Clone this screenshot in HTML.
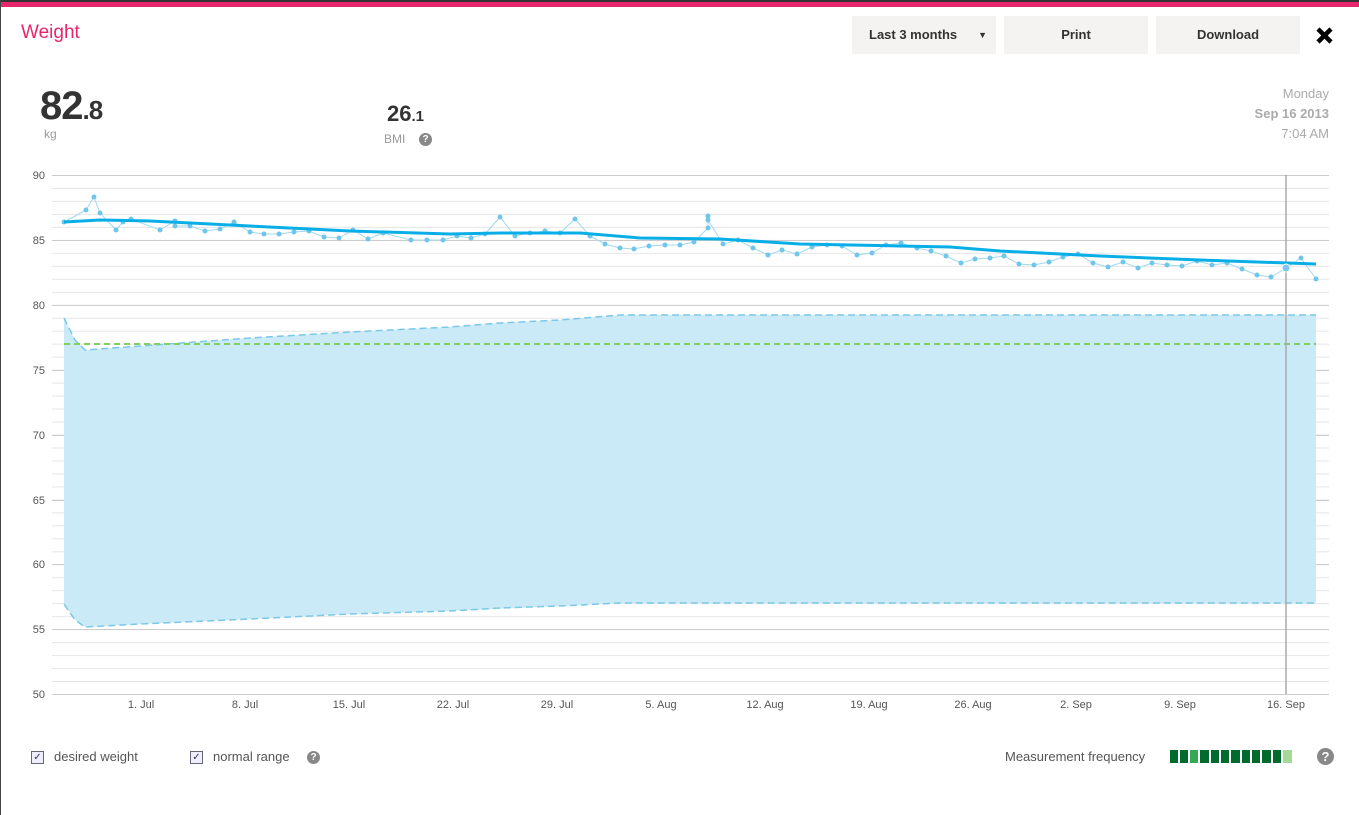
<!DOCTYPE html>
<html><head><meta charset="utf-8"><style>
body{margin:0;width:1359px;height:815px;background:#fff;font-family:"Liberation Sans",sans-serif;position:relative;overflow:hidden}
.top{position:absolute;left:0;top:0;width:1359px;height:2px;background:#333}
.pink{position:absolute;left:0;top:2px;width:1359px;height:5px;background:#e8266b}
.lb{position:absolute;left:0;top:0;width:1px;height:815px;background:#444}
.t{position:absolute;white-space:nowrap}
.btn{position:absolute;top:16px;height:38px;background:#f4f3f2;font-weight:bold;font-size:13px;color:#333;line-height:38px;text-align:center}
.q{position:absolute;width:13px;height:13px;border-radius:50%;background:#888;color:#fff;font-size:10px;font-weight:bold;text-align:center;line-height:13px}
.cb{position:absolute;width:11px;height:11px;border:1px solid #667;background:#eef;font-size:10px;line-height:11px;text-align:center;color:#335}
</style></head><body>
<div class="top"></div><div class="pink"></div><div class="lb"></div>
<div class="t" style="left:21px;top:22px;font-size:19px;color:#e8266b">Weight</div>
<div class="btn" style="left:852px;width:144px;text-align:left;padding-left:17px;box-sizing:border-box">Last 3 months<span style="position:absolute;right:9px;top:0;font-size:9px">▼</span></div>
<div class="btn" style="left:1004px;width:144px">Print</div>
<div class="btn" style="left:1156px;width:144px">Download</div>
<svg style="position:absolute;left:1315px;top:26px" width="19" height="19"><path d="M3,3 L16,16 M16,3 L3,16" stroke="#000" stroke-width="4.5"/></svg>
<div class="t" style="left:40px;top:84px;font-size:40px;font-weight:bold;color:#333;letter-spacing:-1px">82<span style="font-size:26px">.8</span></div>
<div class="t" style="left:44px;top:127px;font-size:12px;color:#999">kg</div>
<div class="t" style="left:387px;top:101px;font-size:22px;font-weight:bold;color:#333">26<span style="font-size:15px">.1</span></div>
<div class="t" style="left:384px;top:132px;font-size:12px;color:#999">BMI</div>
<div class="q" style="left:419px;top:133px">?</div>
<div class="t" style="right:30px;top:84px;font-size:13px;color:#aaa;text-align:right;line-height:20px">Monday<br><b>Sep 16 2013</b><br>7:04 AM</div>
<svg style="position:absolute;left:0;top:0" width="1359" height="815">
<defs>
<pattern id="gp" x="0" y="175" width="1359" height="12.975" patternUnits="userSpaceOnUse"><line x1="0" x2="1359" y1="0.5" y2="0.5" stroke="#e6e6e6"/></pattern>
<marker id="dot" markerWidth="6" markerHeight="6" refX="3" refY="3" markerUnits="userSpaceOnUse"><circle cx="3" cy="3" r="2.5" fill="#6fc6ea"/></marker>
</defs>
<rect x="52" y="175" width="1277" height="520" fill="url(#gp)"/>
<g stroke="#ccc"><line x1="52" x2="1329" y1="175.5" y2="175.5"/><line x1="52" x2="1329" y1="240.5" y2="240.5"/><line x1="52" x2="1329" y1="305.5" y2="305.5"/><line x1="52" x2="1329" y1="370.5" y2="370.5"/><line x1="52" x2="1329" y1="435.5" y2="435.5"/><line x1="52" x2="1329" y1="500.5" y2="500.5"/><line x1="52" x2="1329" y1="564.5" y2="564.5"/><line x1="52" x2="1329" y1="629.5" y2="629.5"/><line x1="52" x2="1329" y1="694.5" y2="694.5"/></g>
<path d="M64,318 L75,340 L85,350 L140,346 L250,338 L350,332 L450,327 L500,323 L560,320 L620,315 L1316,315 L1316,603 L620,603 L560,606 L450,611 L350,614 L250,619 L140,624 L85,627 L75,620 L64,604 Z" fill="#c9eaf6"/>
<path d="M64,318 L75,340 L85,350 L140,346 L250,338 L350,332 L450,327 L500,323 L560,320 L620,315 L1316,315" fill="none" stroke="#7cc8e8" stroke-width="1.5" stroke-dasharray="7,4"/>
<path d="M64,604 L75,620 L85,627 L140,624 L250,619 L350,614 L450,611 L500,608 L560,606 L620,603 L1316,603" fill="none" stroke="#7cc8e8" stroke-width="1.5" stroke-dasharray="7,4"/>
<line x1="64" x2="1316" y1="344" y2="344" stroke="#7fd060" stroke-width="2" stroke-dasharray="6,4"/>
<line x1="1286" x2="1286" y1="175" y2="694" stroke="#aaa" stroke-width="1.5"/>
<polyline fill="none" stroke="#9fd9f0" stroke-width="1" marker-start="url(#dot)" marker-mid="url(#dot)" marker-end="url(#dot)" points="64,222 86,210 94,197 100,213 116,230 123,222 131,219 160,230 175,221 175,226 190,226 205,231 220,229 234,222 250,232 264,234 279,234 294,232 309,231 324,237 339,238 353,230 368,239 383,233 411,240 427,240 443,240 457,236 471,238 485,234 500,217 515,236 530,233 545,231 560,233 575,219 590,236 605,244 620,248 634,249 649,246 665,245 680,245 694,242 708,228 708,216 708,220 723,244 738,240 753,248 768,255 782,250 797,254 812,247 827,245 842,246 857,255 872,253 886,245 901,243 917,248 931,251 946,256 961,263 975,259 990,258 1004,256 1019,264 1034,265 1049,262 1063,257 1078,254 1093,263 1108,267 1123,262 1138,268 1152,263 1167,265 1182,266 1197,261 1212,265 1227,263 1242,269 1257,275 1271,277 1286,268 1301,258 1316,279"/>
<path d="M64,222 L100,220 L150,221 L250,226 L350,231 L450,234 L500,233 L580,233 L640,238 L720,239 L800,244 L900,246 L950,247 L1000,251 L1100,256 L1200,260 L1316,264" fill="none" stroke="#0aaee6" stroke-width="3"/>
<circle cx="1286" cy="268" r="4" fill="#7cc8e8" stroke="#fff" stroke-width="1"/>
<g font-size="11" fill="#555" font-family="Liberation Sans">
<text x="45" y="179" text-anchor="end">90</text><text x="45" y="244" text-anchor="end">85</text><text x="45" y="309" text-anchor="end">80</text><text x="45" y="374" text-anchor="end">75</text><text x="45" y="439" text-anchor="end">70</text><text x="45" y="504" text-anchor="end">65</text><text x="45" y="568" text-anchor="end">60</text><text x="45" y="633" text-anchor="end">55</text><text x="45" y="698" text-anchor="end">50</text>
<g text-anchor="middle"><text x="141" y="708">1. Jul</text><text x="245" y="708">8. Jul</text><text x="349" y="708">15. Jul</text><text x="453" y="708">22. Jul</text><text x="557" y="708">29. Jul</text><text x="661" y="708">5. Aug</text><text x="765" y="708">12. Aug</text><text x="869" y="708">19. Aug</text><text x="973" y="708">26. Aug</text><text x="1076" y="708">2. Sep</text><text x="1180" y="708">9. Sep</text><text x="1286" y="708">16. Sep</text></g>
</g>
<g fill="#006b2c"><rect x="1170" y="750" width="8" height="13"/><rect x="1180" y="750" width="8" height="13"/><rect x="1190" y="750" width="8" height="13" fill="#34a853"/><rect x="1200" y="750" width="9" height="13"/><rect x="1211" y="750" width="8" height="13"/><rect x="1221" y="750" width="8" height="13"/><rect x="1231" y="750" width="9" height="13"/><rect x="1242" y="750" width="8" height="13"/><rect x="1252" y="750" width="8" height="13"/><rect x="1262" y="750" width="9" height="13"/><rect x="1273" y="750" width="8" height="13"/><rect x="1283" y="750" width="9" height="13" fill="#a5d99a"/></g>
</svg>
<div class="cb" style="left:31px;top:751px">✓</div>
<div class="t" style="left:54px;top:749px;font-size:13px;color:#555">desired weight</div>
<div class="cb" style="left:190px;top:751px">✓</div>
<div class="t" style="left:213px;top:749px;font-size:13px;color:#555">normal range</div>
<div class="q" style="left:307px;top:751px">?</div>
<div class="t" style="left:1005px;top:749px;font-size:13px;color:#555">Measurement frequency</div>
<div class="q" style="left:1317px;top:748px;width:17px;height:17px;line-height:17px;font-size:13px">?</div>
</body></html>
